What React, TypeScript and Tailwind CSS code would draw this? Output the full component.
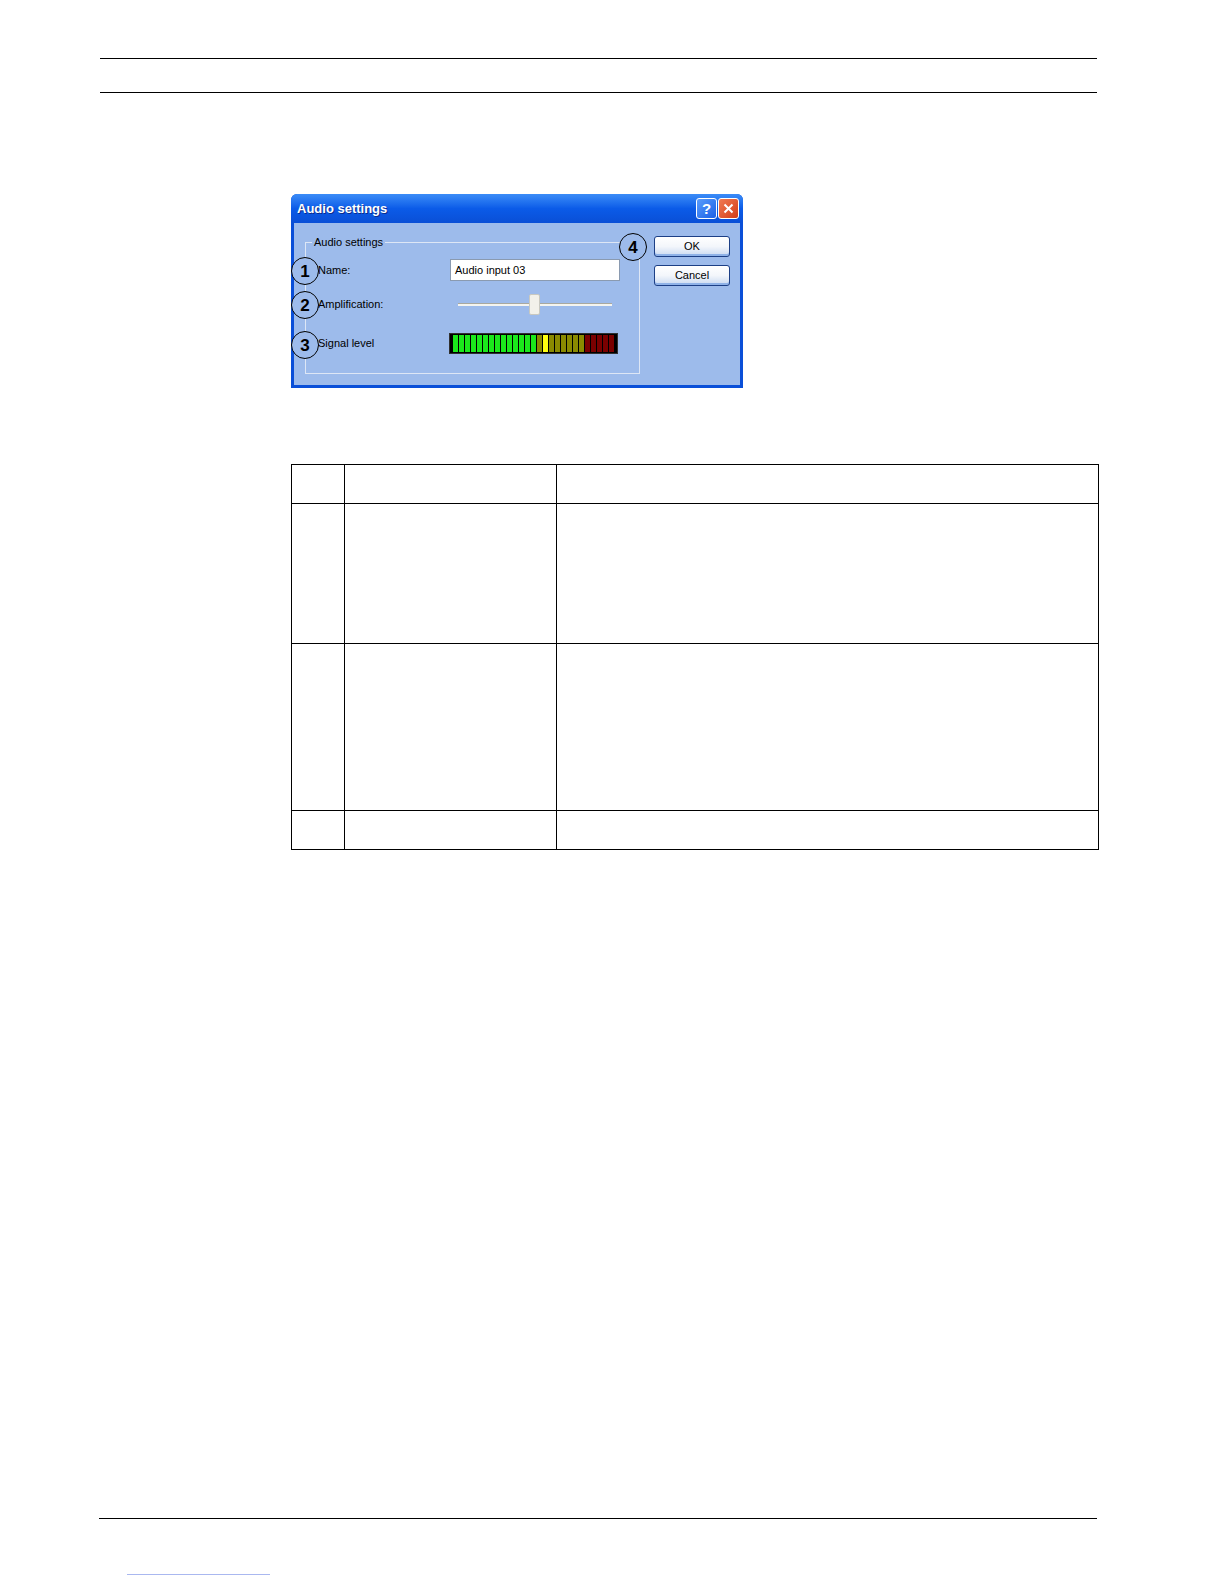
import React from 'react';

// Signal meter segments, left to right.
const METER: string[] = [
  ...Array(14).fill('bg-[#1be81b]'),
  'bg-[#8a8a00]',
  'bg-[#ffff10]',
  ...Array(6).fill('bg-[#8a8a00]'),
  ...Array(5).fill('bg-[#7a0000]'),
];

const ui = { fontFamily: '"Liberation Sans", Arial, sans-serif' };

function Callout({ n, className }: { n: string; className: string }) {
  return (
    <div
      className={`absolute flex h-[28px] w-[28px] items-center justify-center rounded-full border-[1.5px] border-black bg-[#9dbbeb] text-[17px] font-bold leading-none text-black ${className}`}
      style={ui}
    >
      {n}
    </div>
  );
}

function XpButton({ label }: { label: string }) {
  return (
    <button
      type="button"
      className="flex h-[21px] w-[76px] items-center justify-center rounded-[3px] border border-[#1c3f86] bg-gradient-to-b from-white via-[#f3f6fb] to-[#c9d9f1] text-[11px] text-black shadow-[inset_0_-2px_0_#8fb2e8,inset_0_1px_0_#ffffff]"
      style={ui}
    >
      {label}
    </button>
  );
}

function AudioDialog() {
  return (
    <div className="relative ml-[291px] flex h-[194px] w-[452px] flex-col overflow-visible rounded-t-[6px] bg-[#0a4fd8]">
      {/* title bar */}
      <div className="flex h-[29px] items-center justify-between rounded-t-[6px] bg-gradient-to-b from-[#3b8cf7] via-[#0b5be8] to-[#0a4fd6] pl-[6px] pr-[4px]">
        <span className="text-[13px] font-bold text-white [text-shadow:1px_1px_0_#0a2c8c]" style={ui}>
          Audio settings
        </span>
        <div className="flex gap-[1px]">
          <div
            className="flex h-[21px] w-[21px] items-center justify-center rounded-[3px] border border-white bg-gradient-to-br from-[#5a9cfb] to-[#1b5fe6] text-[15px] font-bold leading-none text-white"
            style={ui}
          >
            ?
          </div>
          <div className="flex h-[21px] w-[21px] items-center justify-center rounded-[3px] border border-white bg-gradient-to-br from-[#f07a52] to-[#d33b12]">
            <svg width="11" height="11" viewBox="0 0 11 11">
              <path d="M1.5 1.5 L9.5 9.5 M9.5 1.5 L1.5 9.5" stroke="white" strokeWidth="2" />
            </svg>
          </div>
        </div>
      </div>

      {/* body */}
      <div className="mx-[3px] mb-[3px] flex flex-1 bg-[#9dbbeb] pl-[11px] pt-[12px]">
        <fieldset className="h-[139px] w-[335px] border border-[#dde6f5] pl-[6px]">
          <legend className="px-[2px] text-[11px] leading-[14px] text-black" style={ui}>
            Audio settings
          </legend>
          <div className="mt-[10px] flex h-[22px] items-center">
            <span className="ml-[6px] w-[132px] text-[11px] text-black" style={ui}>
              Name:
            </span>
            <div
              className="flex h-[22px] w-[170px] items-center border border-[#8a9ab0] bg-white pl-[4px] text-[11px] text-black"
              style={ui}
            >
              Audio input 03
            </div>
          </div>
          <div className="mt-[13px] flex h-[21px] items-center">
            <span className="ml-[6px] w-[132px] text-[11px] text-black" style={ui}>
              Amplification:
            </span>
            <div className="relative ml-[8px] h-[21px] w-[154px]">
              <div className="absolute left-0 right-0 top-[9px] h-[3px] border-t border-[#a8a8a0] bg-[#f4f4f0]" />
              <div className="absolute left-[71px] top-0 h-[21px] w-[11px] rounded-[2px] border border-[#c8c8c0] bg-[#f2f1ea]" />
            </div>
          </div>
          <div className="mt-[18px] flex h-[21px] items-center">
            <span className="ml-[6px] w-[131px] text-[11px] text-black" style={ui}>
              Signal level
            </span>
            <div className="flex h-[21px] w-[169px] items-stretch gap-[1px] border border-[#303030] bg-black px-[3px] py-[1px]">
              {METER.map((c, i) => (
                <div key={i} className={`w-[5px] ${c}`} />
              ))}
            </div>
          </div>
        </fieldset>
        <div className="ml-[14px] flex flex-col gap-[8px] pt-[1px]">
          <XpButton label="OK" />
          <XpButton label="Cancel" />
        </div>
      </div>

      <Callout n="1" className="left-0 top-[63px]" />
      <Callout n="2" className="left-0 top-[97px]" />
      <Callout n="3" className="left-0 top-[137px]" />
      <Callout n="4" className="left-[328px] top-[39px]" />
    </div>
  );
}

const ROWS = [38, 139, 166, 38];

export default function App() {
  return (
    <div className="relative h-[1584px] w-[1224px] overflow-hidden bg-white pt-[58px]">
      <div className="ml-[100px] h-px w-[997px] bg-black" />
      <div className="ml-[100px] mt-[33px] h-px w-[997px] bg-black" />

      <div className="mt-[101px]">
        <AudioDialog />
      </div>

      <div className="ml-[291px] mt-[76px] w-[808px] border-l border-t border-black">
        {ROWS.map((h, i) => (
          <div key={i} className="flex">
            <div className="w-[53px] border-b border-r border-black" style={{ height: h + 1 }} />
            <div className="w-[212px] border-b border-r border-black" style={{ height: h + 1 }} />
            <div className="w-[542px] border-b border-r border-black" style={{ height: h + 1 }} />
          </div>
        ))}
      </div>

      <div className="ml-[99px] mt-[668px] h-px w-[998px] bg-black" />
      <div className="ml-[127px] mt-[55px] h-px w-[143px] bg-[#aab8f0]" />
    </div>
  );
}
